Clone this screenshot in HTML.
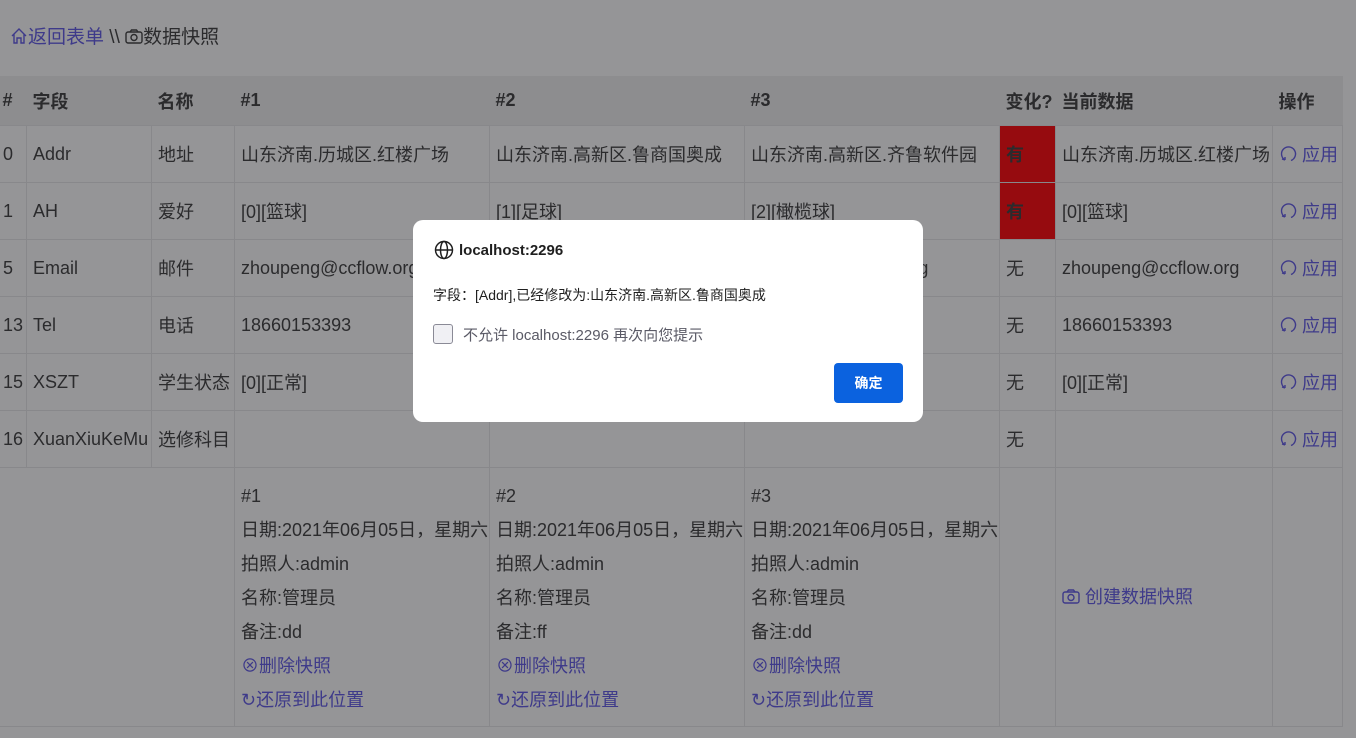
<!DOCTYPE html>
<html><head><meta charset="utf-8"><style>
body{margin:0;width:1356px;height:738px;background:#959597;font-family:"Liberation Sans","Noto Sans CJK SC",sans-serif;color:#2b2b2d;overflow:hidden;position:relative}
.nav{position:absolute;left:10px;top:22px;font-size:19px;color:#2b2b2d}
.nav .l{color:#3e3a8a}
table{position:absolute;left:-4px;top:76px;border-collapse:collapse;font-size:18px}
td,th{border:1px solid #88888b;padding:0 0 0 6px;text-align:left;vertical-align:middle;white-space:nowrap;overflow:hidden}
th{background:#8d8d8f;border:none;height:49px;font-weight:bold}
tr.r td{height:56px}
.red{background:#960b0f;font-weight:bold}
.lk{color:#3e3a8a}
.ap{color:#3e3a8a}
.ft td{vertical-align:top;line-height:34px;padding-top:11px}
.dlg{position:absolute;left:413px;top:220px;width:510px;height:202px;background:#fff;border-radius:10px;color:#1f1f1f}
.dlg .t{position:absolute;left:21px;top:20px;font-size:15px;font-weight:bold;display:flex;align-items:center;gap:5px}
.dlg .m{position:absolute;left:20px;top:65px;font-size:14px}
.dlg .cb{position:absolute;left:20px;top:104px;width:18px;height:18px;border:1px solid #8a8a96;border-radius:3px;background:#f0f0f4}
.dlg .ct{position:absolute;left:50px;top:104px;font-size:15px;color:#5a5a66}
.dlg .b{position:absolute;left:421px;top:143px;width:69px;height:40px;background:#0b62df;border-radius:4px;color:#fff;font-weight:bold;font-size:14px;text-align:center;line-height:40px}
svg{vertical-align:-2px}
</style></head><body>
<div class="nav"><span class="l"><svg width="18" height="18" viewBox="0 0 18 18" fill="none" stroke="#3e3a8a" stroke-width="1.4"><path d="M2 9 L9 2 L16 9 M4 7 V16 H7 V11 H11 V16 H14 V7"/></svg>返回表单</span> \\ <svg width="18" height="16" viewBox="0 0 18 16" fill="none" stroke="#2b2b2d" stroke-width="1.4"><rect x="1" y="3" width="16" height="11" rx="2"/><path d="M5 3 L6.5 1 H11.5 L13 3"/><circle cx="9" cy="8.5" r="3"/></svg>数据快照</div>
<table>
<tr><th style="width:24px">#</th><th style="width:119px">字段</th><th style="width:77px">名称</th><th style="width:249px">#1</th><th style="width:249px">#2</th><th style="width:249px">#3</th><th style="width:50px">变化?</th><th style="width:211px">当前数据</th><th style="width:64px">操作</th></tr>
<tr class="r"><td>0</td><td>Addr</td><td>地址</td><td>山东济南.历城区.红楼广场</td><td>山东济南.高新区.鲁商国奥成</td><td>山东济南.高新区.齐鲁软件园</td><td class="red">有</td><td>山东济南.历城区.红楼广场</td><td class="ap"><svg width="18" height="18" viewBox="0 0 18 18" fill="none" stroke="#3e3a8a" stroke-width="1.4"><path d="M6 15 A7 7 0 1 1 12 15.5 M6 15 L3 14 M6 15 L6 12"/></svg> 应用</td></tr>
<tr class="r"><td>1</td><td>AH</td><td>爱好</td><td>[0][篮球]</td><td>[1][足球]</td><td>[2][橄榄球]</td><td class="red">有</td><td>[0][篮球]</td><td class="ap"><svg width="18" height="18" viewBox="0 0 18 18" fill="none" stroke="#3e3a8a" stroke-width="1.4"><path d="M6 15 A7 7 0 1 1 12 15.5 M6 15 L3 14 M6 15 L6 12"/></svg> 应用</td></tr>
<tr class="r"><td>5</td><td>Email</td><td>邮件</td><td>zhoupeng@ccflow.org</td><td>zhoupeng@ccflow.org</td><td>zhoupeng@ccflow.org</td><td>无</td><td>zhoupeng@ccflow.org</td><td class="ap"><svg width="18" height="18" viewBox="0 0 18 18" fill="none" stroke="#3e3a8a" stroke-width="1.4"><path d="M6 15 A7 7 0 1 1 12 15.5 M6 15 L3 14 M6 15 L6 12"/></svg> 应用</td></tr>
<tr class="r"><td>13</td><td>Tel</td><td>电话</td><td>18660153393</td><td>18660153393</td><td>18660153393</td><td>无</td><td>18660153393</td><td class="ap"><svg width="18" height="18" viewBox="0 0 18 18" fill="none" stroke="#3e3a8a" stroke-width="1.4"><path d="M6 15 A7 7 0 1 1 12 15.5 M6 15 L3 14 M6 15 L6 12"/></svg> 应用</td></tr>
<tr class="r"><td>15</td><td>XSZT</td><td>学生状态</td><td>[0][正常]</td><td>[0][正常]</td><td>[0][正常]</td><td>无</td><td>[0][正常]</td><td class="ap"><svg width="18" height="18" viewBox="0 0 18 18" fill="none" stroke="#3e3a8a" stroke-width="1.4"><path d="M6 15 A7 7 0 1 1 12 15.5 M6 15 L3 14 M6 15 L6 12"/></svg> 应用</td></tr>
<tr class="r"><td>16</td><td>XuanXiuKeMu</td><td>选修科目</td><td></td><td></td><td></td><td>无</td><td></td><td class="ap"><svg width="18" height="18" viewBox="0 0 18 18" fill="none" stroke="#3e3a8a" stroke-width="1.4"><path d="M6 15 A7 7 0 1 1 12 15.5 M6 15 L3 14 M6 15 L6 12"/></svg> 应用</td></tr>
<tr class="ft" style="height:259px"><td colspan="3" style="border-left:none"></td>
<td>#1<br>日期:2021年06月05日，星期六<br>拍照人:admin<br>名称:管理员<br>备注:dd<br><span class="lk">⊗删除快照</span><br><span class="lk">↻还原到此位置</span></td>
<td>#2<br>日期:2021年06月05日，星期六<br>拍照人:admin<br>名称:管理员<br>备注:ff<br><span class="lk">⊗删除快照</span><br><span class="lk">↻还原到此位置</span></td>
<td>#3<br>日期:2021年06月05日，星期六<br>拍照人:admin<br>名称:管理员<br>备注:dd<br><span class="lk">⊗删除快照</span><br><span class="lk">↻还原到此位置</span></td>
<td></td><td style="vertical-align:middle;padding-top:0"><span class="lk"><svg width="18" height="16" viewBox="0 0 18 16" fill="none" stroke="#3e3a8a" stroke-width="1.4"><rect x="1" y="3" width="16" height="11" rx="2"/><path d="M5 3 L6.5 1 H11.5 L13 3"/><circle cx="9" cy="8.5" r="3"/></svg> 创建数据快照</span></td><td></td></tr>
</table>
<div class="dlg">
<div class="t"><svg width="20" height="20" viewBox="0 0 20 20" fill="none" stroke="#1f1f1f" stroke-width="1.5"><circle cx="10" cy="10" r="8.5"/><ellipse cx="10" cy="10" rx="3.5" ry="8.5"/><path d="M1.5 10 H18.5"/></svg>localhost:2296</div>
<div class="m">字段：[Addr],已经修改为:山东济南.高新区.鲁商国奥成</div>
<div class="cb"></div>
<div class="ct">不允许 localhost:2296 再次向您提示</div>
<div class="b">确定</div>
</div>
</body></html>
